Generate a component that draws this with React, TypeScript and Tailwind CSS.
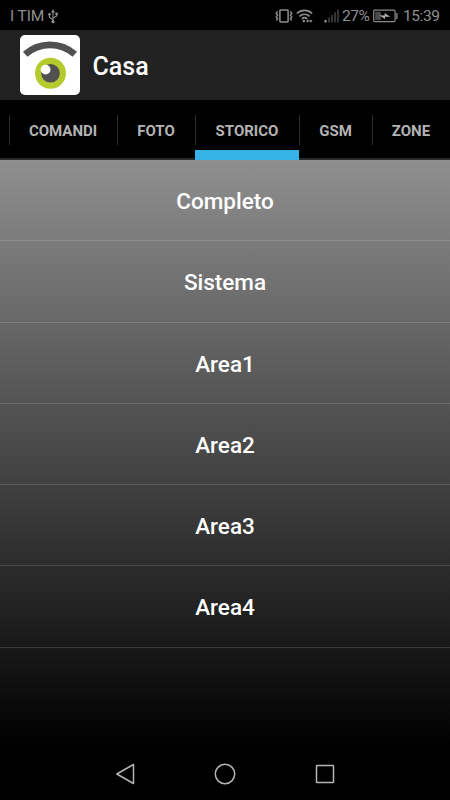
const tabs = [
  { label: "COMANDI", width: "w-[108px]" },
  { label: "FOTO", width: "w-[78px]" },
  { label: "STORICO", width: "w-[104px]", active: true },
  { label: "GSM", width: "w-[73px]" },
  { label: "ZONE", width: "w-[78px]" },
];

const rows = ["Completo", "Sistema", "Area1", "Area2", "Area3", "Area4"];

function UsbIcon() {
  return (
    <svg width="10" height="15" viewBox="0 0 10 15" fill="none" stroke="currentColor" strokeWidth="1.1">
      <path d="M5 2v10M5 10.8 1.4 8.5v-3M5 9.3 8.600 7V4.500" />
      <path d="M5 .2 3 3.600h4z" fill="currentColor" stroke="none" />
      <circle cx="5" cy="12.7" r="1.6" fill="currentColor" stroke="none" />
      <circle cx="1.5" cy="5.2" r="1.3" fill="currentColor" stroke="none" />
      <path d="M7.400 3.600h2.400V6H7.400z" fill="currentColor" stroke="none" />
    </svg>
  );
}

function VibrateIcon() {
  return (
    <svg width="18" height="14" viewBox="0 0 18 14" fill="none" stroke="currentColor">
      <rect x="4.9" y="1" width="8.2" height="12" rx=".8" strokeWidth="1.5" />
      <path d="M2.600 2.500 1.200 4.300l1.400 1.800-1.400 1.800 1.400 1.800-1.200 1.800M15.400 2.500l1.400 1.800-1.400 1.800 1.400 1.800-1.400 1.800 1.200 1.800" strokeWidth="1.4" />
    </svg>
  );
}

function WifiIcon() {
  return (
    <svg width="17" height="14" viewBox="0 0 17 14" fill="none" stroke="currentColor" strokeWidth="1.6">
      <path d="M.8 4.5c4.3-4.2 11.1-4.2 15.4 0M3.4 7.3c2.9-2.8 7.3-2.8 10.2 0M5.9 9.8c1.5-1.4 3.7-1.4 5.2 0" />
      <circle cx="7.8" cy="12" r="1.2" fill="currentColor" stroke="none" />
      <path d="m10 12 2.200-1.800v3.600zM16.600 12l-2.200-1.800v3.600z" fill="currentColor" stroke="none" />
      <path d="M12 12h3" strokeWidth="1" />
    </svg>
  );
}

function SignalIcon() {
  return (
    <svg width="16" height="14" viewBox="0 0 16 14">
      <path d="M.5 11h2v2.5h-2z" fill="#a0a0a0" />
      <path d="M4 8.5h2v5H4zM7 6h2v7.5H7zM10 3.2h2v10.3h-2zM13 .5h2v13h-2z" fill="#333" />
    </svg>
  );
}

function BatteryIcon() {
  return (
    <svg width="25" height="14" viewBox="0 0 25 14" fill="none">
      <rect x=".7" y="1.2" width="21.4" height="11.4" rx="1" stroke="#8c8c8c" strokeWidth="1.2" />
      <path d="M2.2 2.8h5.6V11H2.2z" fill="#4c4c4c" />
      <path d="M23.2 4h1.3v6h-1.3z" fill="#8c8c8c" />
      <path d="m6.2 6.3 5.4.1V4l5.6 3.8-5.2-.1V10z" fill="#b0b0b0" />
    </svg>
  );
}

function StatusBar() {
  return (
    <div className="flex h-[30px] items-center justify-between px-[10px] pt-[2px] text-[15.5px] leading-none text-[#8f8f8f]">
      <div className="flex items-center">
        <span className="w-[38px] whitespace-nowrap pt-px tracking-[-0.1px]">I TIM</span>
        <UsbIcon />
      </div>
      <div className="flex items-center">
        <VibrateIcon />
        <span className="ml-[3px]">
          <WifiIcon />
        </span>
        <span className="ml-[11px]">
          <SignalIcon />
        </span>
        <span className="ml-[2px] w-[29px] whitespace-nowrap pt-px tracking-[-0.5px]">27%</span>
        <span className="ml-[2px]">
          <BatteryIcon />
        </span>
        <span className="ml-[5px] w-[37px] whitespace-nowrap pt-px tracking-[-0.4px]">15:39</span>
      </div>
    </div>
  );
}

function Logo() {
  return (
    <svg width="60" height="60" viewBox="0 0 60 60">
      <rect width="60" height="60" rx="5" fill="#fff" />
      <path d="M5.2 19.300A37.100 37.100 0 0 1 54.800 19.300" fill="none" stroke="#515151" strokeWidth="6.8" />
      <circle cx="30.5" cy="38.3" r="15.5" fill="#b5cb2d" />
      <circle cx="30.5" cy="38.3" r="9.3" fill="#515151" />
      <circle cx="25.6" cy="34.6" r="4.9" fill="#fff" />
    </svg>
  );
}

function NavBar() {
  return (
    <nav className="flex h-[53px] items-center justify-center gap-[76px] text-[#b5b5b5]">
      <svg width="24" height="24" viewBox="0 0 24 24" fill="none" stroke="currentColor" strokeWidth="1.5" strokeLinejoin="round">
        <path d="M20.500 2.500v19L3.800 12z" />
      </svg>
      <svg width="24" height="24" viewBox="0 0 24 24" fill="none" stroke="currentColor" strokeWidth="1.5">
        <circle cx="12" cy="12" r="9.7" />
      </svg>
      <svg width="24" height="24" viewBox="0 0 24 24" fill="none" stroke="currentColor" strokeWidth="1.5">
        <rect x="3.5" y="3.5" width="17" height="17" rx=".5" />
      </svg>
    </nav>
  );
}

export default function App() {
  return (
    <div className="flex h-[800px] w-[450px] flex-col overflow-hidden bg-black font-['Roboto',sans-serif]">
      <StatusBar />
      <header className="flex h-[70px] items-center bg-[#212121] pl-5">
        <Logo />
        <h1 className="ml-[12.5px] pt-[4px] text-[25px] font-medium text-white">Casa</h1>
      </header>

      <div className="flex h-[60px]">
        <div className="w-[9px] shrink-0 border-b-2 border-[#292929]" />
        {tabs.map((tab) => (
          <div
            key={tab.label}
            className={`flex shrink-0 flex-col ${tab.width} ${tab.active ? "" : "border-b-2 border-[#292929]"}`}
          >
            <div className="mt-[15px] flex h-[30px] items-center justify-center border-l border-[#2b2b2b] pr-px pt-[2px] text-[15px] font-bold text-[#b3b3b3]">
              {tab.label}
            </div>
            {tab.active && <div className="mt-[5px] h-[10px] bg-[#35b3e6]" />}
          </div>
        ))}
      </div>

      <main className="h-[587px] shrink-0 bg-[linear-gradient(to_bottom,#8f8f8f,#000)]">
        {rows.map((row) => (
          <div
            key={row}
            className="flex h-[81.25px] items-center justify-center border-b border-white/15 pt-[3.5px] text-[22.5px] font-medium text-white"
          >
            {row}
          </div>
        ))}
      </main>

      <NavBar />
    </div>
  );
}
